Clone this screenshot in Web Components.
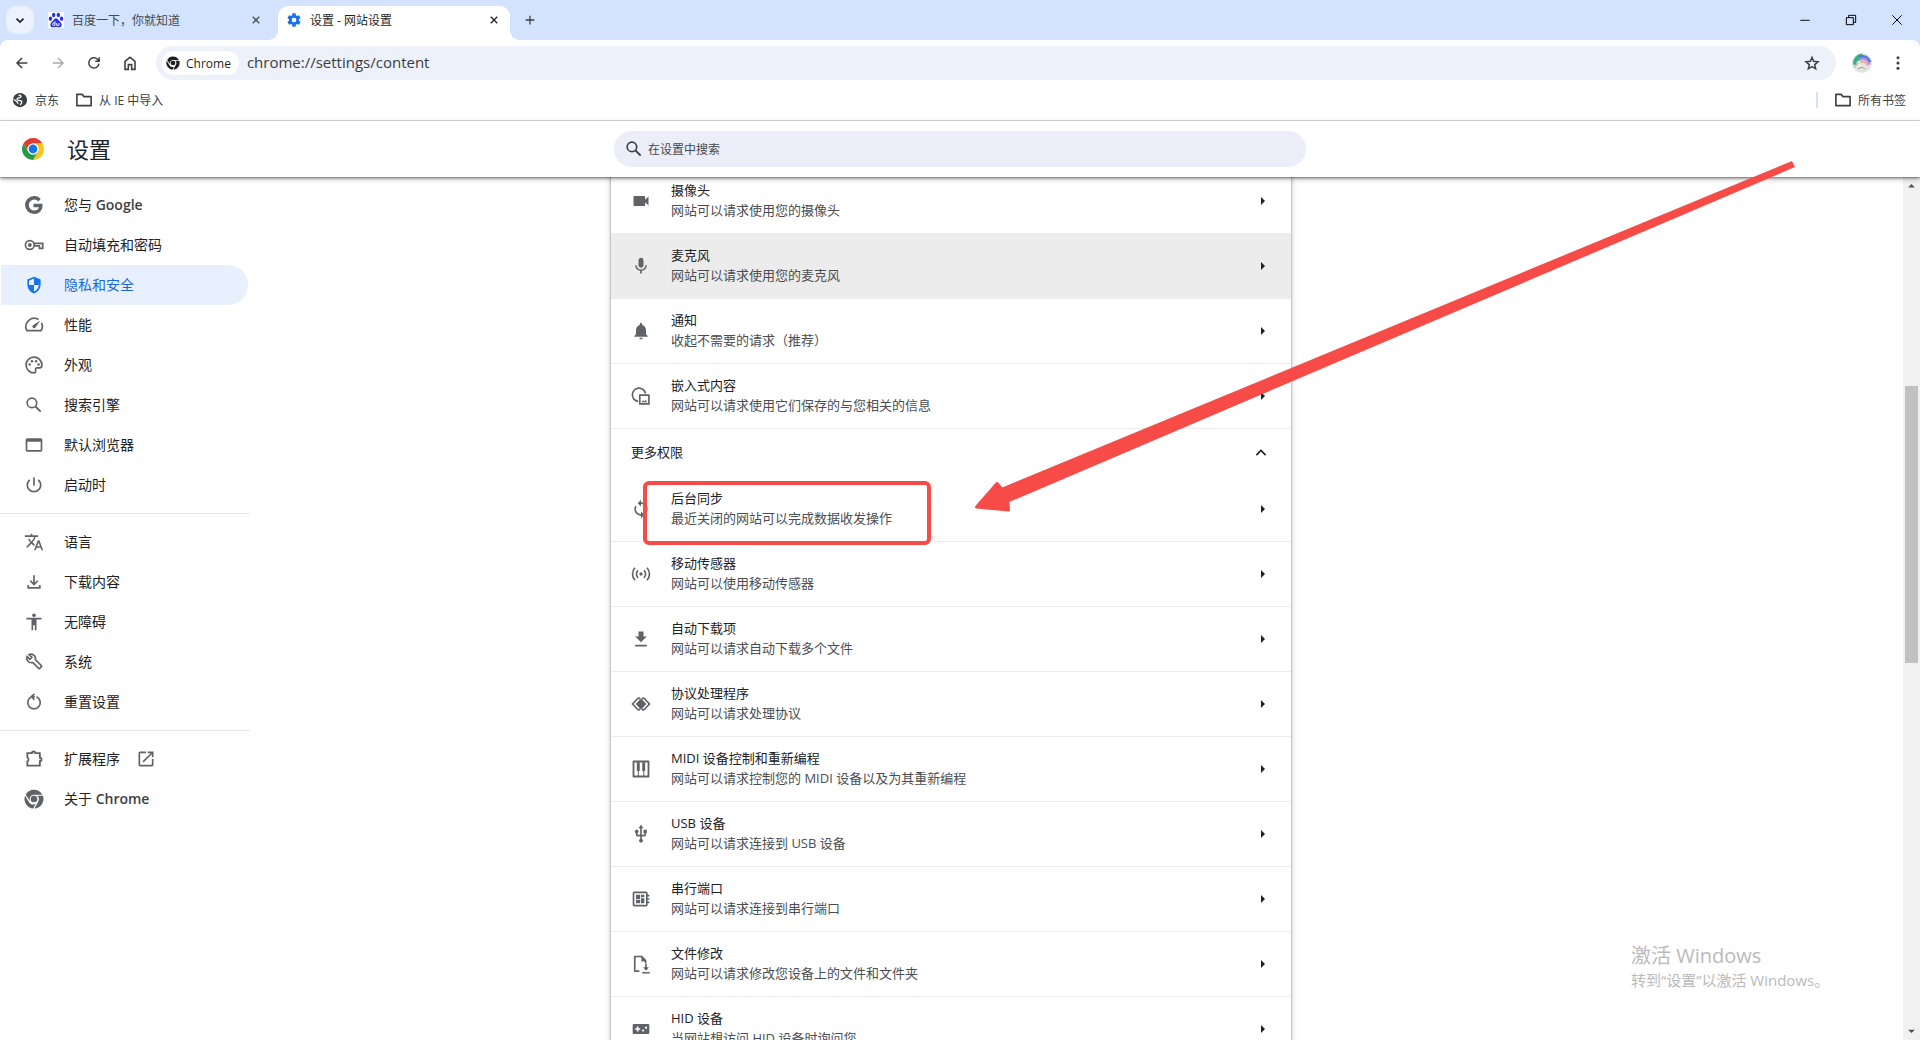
<!DOCTYPE html>
<html lang="zh-CN">
<head>
<meta charset="utf-8">
<title>设置 - 网站设置</title>
<style>
    body {
        margin: 0;
        font-family: "Open Sans", "Noto Sans CJK SC", sans-serif;
        font-size: 13px;
        color: #202124;
        background: #fff;
        overflow: hidden;
    }
    menu-item b {
        font-weight: 600;
        color: #3c4043;
    }
</style>
</head>
<body>
<browser-window>
    <tab-strip slot="tabs">
        <browser-tab icon="baidu">百度一下，你就知道</browser-tab>
        <browser-tab icon="gear" active>设置 - 网站设置</browser-tab>
    </tab-strip>
    <nav-bar slot="nav" url="chrome://settings/content"></nav-bar>
    <bookmark-bar slot="bookmarks">
        <bookmark-item icon="globe">京东</bookmark-item>
        <bookmark-item icon="folder">从 IE 中导入</bookmark-item>
        <bookmark-item slot="end" icon="folder">所有书签</bookmark-item>
    </bookmark-bar>

    <settings-header></settings-header>
    <settings-body>
        <side-menu slot="menu">
            <menu-item icon="google">您与 <b>Google</b></menu-item>
            <menu-item icon="key">自动填充和密码</menu-item>
            <menu-item icon="shield" selected>隐私和安全</menu-item>
            <menu-item icon="speed">性能</menu-item>
            <menu-item icon="palette">外观</menu-item>
            <menu-item icon="search">搜索引擎</menu-item>
            <menu-item icon="window">默认浏览器</menu-item>
            <menu-item icon="power">启动时</menu-item>
            <menu-line></menu-line>
            <menu-item icon="translate">语言</menu-item>
            <menu-item icon="download">下载内容</menu-item>
            <menu-item icon="person">无障碍</menu-item>
            <menu-item icon="wrench">系统</menu-item>
            <menu-item icon="reset">重置设置</menu-item>
            <menu-line></menu-line>
            <menu-item icon="puzzle" after="launch">扩展程序</menu-item>
            <menu-item icon="chrome">关于 <b>Chrome</b></menu-item>
        </side-menu>

        <permission-card>
            <permission-row icon="camera" name="摄像头">网站可以请求使用您的摄像头</permission-row>
            <permission-row icon="mic" name="麦克风" hovered>网站可以请求使用您的麦克风</permission-row>
            <permission-row icon="bell" name="通知">收起不需要的请求（推荐）</permission-row>
            <permission-row icon="embed" name="嵌入式内容">网站可以请求使用它们保存的与您相关的信息</permission-row>
            <group-header>更多权限</group-header>
            <permission-row icon="sync" name="后台同步" marked>最近关闭的网站可以完成数据收发操作</permission-row>
            <permission-row icon="sensor" name="移动传感器">网站可以使用移动传感器</permission-row>
            <permission-row icon="autodown" name="自动下载项">网站可以请求自动下载多个文件</permission-row>
            <permission-row icon="protocol" name="协议处理程序">网站可以请求处理协议</permission-row>
            <permission-row icon="midi" name="MIDI 设备控制和重新编程">网站可以请求控制您的 MIDI 设备以及为其重新编程</permission-row>
            <permission-row icon="usb" name="USB 设备">网站可以请求连接到 USB 设备</permission-row>
            <permission-row icon="serial" name="串行端口">网站可以请求连接到串行端口</permission-row>
            <permission-row icon="fileedit" name="文件修改">网站可以请求修改您设备上的文件和文件夹</permission-row>
            <permission-row icon="hid" name="HID 设备">当网站想访问 HID 设备时询问您</permission-row>
        </permission-card>
    </settings-body>

    <pointer-arrow slot="over"></pointer-arrow>
    <activation-note slot="over"></activation-note>
</browser-window>

<script>
const chromeShape = `
    <path d="M2 6.800A11.500 11.500 0 0 1 22 6.800H12A5.200 5.200 0 0 0 7.500 14.600Z"/>
    <path d="M22.700 8A11.500 11.500 0 0 1 12.500 23.500L17 15.200A6 6 0 0 0 16 8Z"/>
    <path d="M11 23.500A11.500 11.500 0 0 1 1.300 8L6.500 16.500A6 6 0 0 0 14 17.800Z"/>
    <circle cx="12" cy="12" r="4"/>`

const icons = {
    down: '<path d="M6 9.500l6 6 6-6" fill="none" stroke="currentColor" stroke-width="3"/>',
    up: '<path d="M6.500 14.500L12 9l5.500 5.500" fill="none" stroke="currentColor" stroke-width="2"/>',
    close: '<path d="M5.500 5.500l13 13M18.500 5.500l-13 13" stroke="currentColor" stroke-width="2.500"/>',
    plus: '<path d="M12 4.500v15M4.500 12h15" stroke="currentColor" stroke-width="2.200"/>',
    baidu: `<rect width="24" height="24" rx="2" fill="#fff"/>
        <g fill="#2932e1"><ellipse cx="8.500" cy="4.500" rx="2.600" ry="3.500"/><ellipse cx="15.500" cy="4.500" rx="2.600" ry="3.500"/>
        <ellipse cx="3.700" cy="10" rx="2.600" ry="3.300"/><ellipse cx="20.300" cy="10" rx="2.600" ry="3.300"/>
        <path d="M12 9.500c-2 0-3 2-4.500 3.500S3.500 16 3.500 19c0 2.500 1.500 4 3.500 4 2 0 3-.500 5-.500s3 .500 5 .500 3.500-1.500 3.500-4c0-3-2.500-4.500-4-6S14 9.500 12 9.500z"/></g>
        <path d="M10.500 14v6H8.500a1.500 1.500 0 0 1 0-3.500h2M13 16.500V20h3.500v-3.500" fill="none" stroke="#fff" stroke-width="1.400"/>`,
    gear: '<path fill="#1a73e8" d="M19.430 12.980c.040-.320.070-.640.070-.980s-.030-.660-.070-.980l2.110-1.650c.190-.150.240-.420.120-.640l-2-3.460c-.120-.220-.390-.300-.610-.220l-2.490 1c-.520-.400-1.080-.730-1.690-.980l-.380-2.650C14.460 2.180 14.250 2 14 2h-4c-.250 0-.460.180-.490.420l-.380 2.650c-.610.250-1.170.590-1.690.980l-2.490-1c-.230-.090-.490 0-.610.220l-2 3.460c-.130.220-.070.490.120.640l2.110 1.650c-.040.320-.070.650-.070.980s.030.660.070.980l-2.110 1.650c-.190.150-.240.420-.120.640l2 3.460c.120.220.390.300.610.220l2.490-1c.520.400 1.080.730 1.690.980l.380 2.650c.030.240.240.420.490.420h4c.250 0 .460-.180.490-.420l.380-2.650c.610-.250 1.170-.590 1.690-.980l2.490 1c.230.090.490 0 .610-.220l2-3.460c.120-.220.070-.490-.120-.640l-2.110-1.650zM12 15.500A3.500 3.500 0 1 1 12 8.500a3.500 3.500 0 0 1 0 7z"/>',
    back: '<path d="M20 12H5M12 4.500L4.500 12l7.500 7.500" fill="none" stroke="currentColor" stroke-width="2.200"/>',
    forward: '<path d="M4 12h15M12 4.500l7.500 7.500-7.500 7.500" fill="none" stroke="currentColor" stroke-width="2.200"/>',
    reload: '<path d="M19.500 13a7.700 7.700 0 1 1-2.200-6.700L19.500 9M19.800 3.500v6h-6" fill="none" stroke="currentColor" stroke-width="2.200"/>',
    home: '<path d="M4.500 21.500V9.500L12 3.500l7.500 6v12h-5v-7h-5v7z" fill="none" stroke="currentColor" stroke-width="2.400"/>',
    chrome: chromeShape,
    logo: `<g transform="scale(.5)"><path fill="#e33b2e" d="M4.950 13A22 22 0 0 1 43.050 13H24A11 11 0 0 0 14.470 29.500Z"/>
        <path fill="#fcc31e" d="M43.050 13A22 22 0 0 1 24 46L33.530 29.500A11 11 0 0 0 24 13Z"/>
        <path fill="#229a48" d="M24 46A22 22 0 0 1 4.950 13L14.470 29.500A11 11 0 0 0 33.530 29.500Z"/>
        <circle cx="24" cy="24" r="11" fill="#fff"/><circle cx="24" cy="24" r="8.800" fill="#1a73e8"/></g>`,
    star: '<path d="M12 4.500l2.200 5.300 5.800.500-4.400 3.800 1.300 5.600-4.900-3-4.900 3 1.300-5.600L4 10.300l5.800-.500z" fill="none" stroke="currentColor" stroke-width="2"/>',
    dots: '<circle cx="12" cy="4" r="2.300"/><circle cx="12" cy="12" r="2.300"/><circle cx="12" cy="20" r="2.300"/>',
    avatar: `<circle cx="12" cy="12" r="12" fill="#e2e2e2"/>
        <path d="M1.500 14A11 11 0 0 1 12 1l3 5-8 4-2 4z" fill="#3fae86"/>
        <path d="M9 5c6-3 11 1 13 6" fill="none" stroke="#4f7bdc" stroke-width="3"/>
        <path d="M9 8c5-3 10 0 12 6" fill="none" stroke="#b58ae6" stroke-width="2.500"/>
        <path d="M10 11c4-2 7 0 9 4" fill="none" stroke="#f0a7b4" stroke-width="2.500"/>
        <path d="M6 10l4 1 2 4 5 1-2 3-4-2-3 2-3-3z" fill="#f3ead8"/><path d="M3 17l5-5M7 19l5-2 4 2" fill="none" stroke="#8fa39a" stroke-width="1.200"/>`,
    globe: '<circle cx="12" cy="12" r="9.500"/><path d="M10 5.500c3 0 4 1 3 2.500s-5 1-5 3 3 1.500 5 2 2 3-1 5.500M3.500 11.500c2 0 3 1.500 4 2.500s2 1.500 1.500 3" fill="none" stroke="#fff" stroke-width="1.800"/>',
    folder: '<path d="M2.500 19.500v-15h7l2.500 3h9.500v12z" fill="none" stroke="currentColor" stroke-width="2.200" stroke-linejoin="round"/>',
    google: '<path stroke="currentColor" stroke-width="1.500" d="M21.350 11.100h-9.170v2.730h6.510c-.330 3.810-3.500 5.440-6.500 5.440C8.360 19.270 5 16.250 5 12c0-4.100 3.200-7.270 7.200-7.270 3.090 0 4.900 1.970 4.900 1.970L19 4.720S16.560 2 12.100 2C6.420 2 2.030 6.800 2.030 12c0 5.050 4.130 10 10.220 10 5.350 0 9.250-3.670 9.250-9.090 0-1.150-.150-1.810-.150-1.810z"/>',
    key: '<circle cx="7" cy="12" r="5.300" fill="none" stroke="currentColor" stroke-width="2"/><circle cx="7" cy="12" r="2.400"/><path d="M12 10h10.500v6h-4v-3H12" fill="none" stroke="currentColor" stroke-width="2"/>',
    shield: '<path d="M12 2L4 5.500v5.500c0 5 3.400 9.700 8 11 4.600-1.300 8-6 8-11V5.500zm0 10h6c-.500 3.500-2.800 6.700-6 7.800V12H6V6.800l6-2.600z"/>',
    speed: '<path d="M17.500 5.500A10 10 0 0 0 3.500 18.800h17a10 10 0 0 0 .5-9.500" fill="none" stroke="currentColor" stroke-width="2"/><path d="M19.500 6.500l-8.900 5.700a2 2 0 1 0 3.200 2.800z"/>',
    palette: '<path d="M12 2.500a9.500 9.500 0 0 0 0 19c1.500 0 2.300-1.200 2-2.500-.6-2-.2-3.500 2-3.500h2.500c1.800 0 3-1.500 3-3.500 0-5.500-4.500-9.500-9.500-9.500z" fill="none" stroke="currentColor" stroke-width="2"/><circle cx="6.800" cy="11.500" r="1.500"/><circle cx="9.500" cy="7.500" r="1.500"/><circle cx="14.500" cy="7.500" r="1.500"/><circle cx="17.500" cy="11.500" r="1.500"/>',
    search: '<circle cx="9.500" cy="9.500" r="5.700" fill="none" stroke="currentColor" stroke-width="2"/><path d="M13.500 13.500l6.500 6.500" stroke="currentColor" stroke-width="2.300"/>',
    window: '<path d="M2 6a2 2 0 0 1 2-2h16a2 2 0 0 1 2 2v12a2 2 0 0 1-2 2H4a2 2 0 0 1-2-2zm2 2v10h16V8z"/>',
    power: '<path d="M13 3h-2v10h2V3zm4.830 2.170l-1.420 1.420C17.990 7.860 19 9.810 19 12c0 3.870-3.130 7-7 7s-7-3.130-7-7c0-2.190 1.010-4.140 2.580-5.420L6.170 5.170C4.230 6.820 3 9.260 3 12c0 4.970 4.030 9 9 9s9-4.030 9-9c0-2.740-1.230-5.180-3.170-6.830z"/>',
    translate: '<path d="M12.870 15.070l-2.540-2.510.030-.030c1.740-1.940 2.980-4.170 3.710-6.530H17V4h-7V2H8v2H1v1.990h11.170C11.500 7.920 10.440 9.750 9 11.350 8.070 10.320 7.300 9.190 6.690 8h-2c.730 1.630 1.730 3.170 2.980 4.560l-5.090 5.020L4 19l5-5 3.110 3.110.760-2.040zM18.500 10h-2L12 22h2l1.120-3h4.750L21 22h2l-4.500-12zm-2.620 7l1.620-4.330L19.120 17h-3.240z"/>',
    download: '<path d="M12 4v10.500M7.500 10.500L12 15l4.500-4.500M5 15.500V19h14v-3.500" fill="none" stroke="currentColor" stroke-width="2"/>',
    person: '<circle cx="12" cy="4" r="2.200"/><path d="M21 9h-6v13h-2v-6h-2v6H9V9H3V7h18z"/>',
    wrench: '<path d="M21.500 18.700l-8-8a6 6 0 0 0-8.400-6.700l3.700 3.700-2.600 2.600L2.500 6.600a6 6 0 0 0 7.400 7.900l8 8q.7.700 1.400 0l2.200-2.400q.7-.700 0-1.400z" transform="translate(1.500 -.5) scale(.9)" fill="none" stroke="currentColor" stroke-width="2.200"/>',
    reset: '<path d="M9 5.800a7.500 7.500 0 1 0 6 0M8 5.500l5 .200M12.500 2.300L9 5.700l3.500 3.500" fill="none" stroke="currentColor" stroke-width="2"/>',
    puzzle: '<path d="M4 5h5.500a2 2 0 0 1 4 0H19v5.500a2 2 0 0 1 0 4V20H4v-5a3 3 0 0 0 0-5z" fill="none" stroke="currentColor" stroke-width="2.200"/>',
    launch: '<path d="M19 19H5V5h7V3H5a2 2 0 0 0-2 2v14a2 2 0 0 0 2 2h14a2 2 0 0 0 2-2v-7h-2v7zM14 3v2h3.590l-9.830 9.830 1.410 1.410L19 6.410V10h2V3h-7z"/>',
    camera: '<path d="M17 10.500V7a1 1 0 0 0-1-1H4a1 1 0 0 0-1 1v10a1 1 0 0 0 1 1h12a1 1 0 0 0 1-1v-3.500l4 4v-11z"/>',
    mic: '<path d="M12 14c1.660 0 3-1.340 3-3V5c0-1.660-1.340-3-3-3S9 3.340 9 5v6c0 1.660 1.340 3 3 3zm5.300-3c0 3-2.540 5.100-5.300 5.100S6.700 14 6.700 11H5c0 3.410 2.720 6.230 6 6.720V21h2v-3.280c3.280-.480 6-3.300 6-6.720h-1.700z"/>',
    bell: '<path d="M12 22c1.100 0 2-.900 2-2h-4c0 1.100.890 2 2 2zm6-6v-5c0-3.070-1.640-5.640-4.500-6.320V4c0-.830-.670-1.500-1.500-1.500s-1.500.670-1.500 1.500v.680C7.630 5.360 6 7.920 6 11v5l-2 2v1h16v-1l-2-2z"/>',
    embed: '<path d="M8.500 18.500A8 8 0 1 1 17.500 9M10.500 11h11v10.500h-11z" fill="none" stroke="currentColor" stroke-width="2" stroke-linejoin="round"/><path d="M12.500 19.500l2-2.500 1.500 1.500 1.500-2 2 3z"/>',
    sync: '<path d="M12 4V1L8 5l4 4V6c3.310 0 6 2.690 6 6 0 1.010-.250 1.970-.700 2.800l1.460 1.460A7.930 7.930 0 0 0 20 12c0-4.420-3.580-8-8-8zm0 14c-3.310 0-6-2.690-6-6 0-1.010.250-1.970.700-2.800L5.240 7.740A7.930 7.930 0 0 0 4 12c0 4.420 3.580 8 8 8v3l4-4-4-4v3z"/>',
    sensor: '<circle cx="12" cy="12" r="2"/><path d="M8.500 7.500a6 6 0 0 0 0 9M15.500 7.500a6 6 0 0 1 0 9M4.800 4.500a11 11 0 0 0 0 15M19.200 4.500a11 11 0 0 1 0 15" fill="none" stroke="currentColor" stroke-width="2"/>',
    autodown: '<path d="M19 9h-4V3H9v6H5l7 7 7-7zM5 19v2h14v-2H5z"/>',
    protocol: '<path d="M12 5.500l6.500 6.500-6.500 6.500L5.500 12z"/><path d="M9 4.500L1.800 12 9 19.500M15 4.500l7.200 7.500-7.200 7.500M9 4.500l2 1.500M15 4.500L13 6M9 19.500l2-1.500M15 19.500L13 18" fill="none" stroke="currentColor" stroke-width="2"/>',
    midi: '<path d="M3 3h18v18H3z" fill="none" stroke="currentColor" stroke-width="2.200" stroke-linejoin="round"/><path d="M7 4h3.500v10.500H7zM13.500 4H17v10.500h-3.500zM8.200 14h1.200v6.500H8.200zM14.700 14h1.200v6.500h-1.200z"/>',
    usb: '<path d="M15 7v4h1v2h-3V5h2l-3-4-3 4h2v8H8v-2.070A2.200 2.200 0 1 0 5.800 11v2c0 1.110.890 2 2 2h3.200v3.050a2.200 2.200 0 1 0 2 0V15h3c1.110 0 2-.890 2-2v-2h1V7h-4z"/>',
    serial: '<path d="M2 5a2 2 0 0 1 2-2h14a2 2 0 0 1 2 2v2h2v2h-2v2h2v2h-2v2h2v2h-2v2a2 2 0 0 1-2 2H4a2 2 0 0 1-2-2zm2 0v14h14V5zm2 2h5v5H6zm6 0h4v3h-4zm-6 6h5v4H6zm6-2h4v6h-4z" fill-rule="evenodd"/>',
    fileedit: '<path d="M10 20.500H4.500V3H13l4.500 5v3.500" fill="none" stroke="currentColor" stroke-width="2" stroke-linejoin="round"/><path d="M12.500 3v6h5.500zM17 12h2v4h2.500L18 20l-3.500-4H17zM13.500 21.500h9v1.800h-9z"/>',
    hid: '<path fill-rule="evenodd" d="M3.500 6h17A1.500 1.500 0 0 1 22 7.500v9a1.500 1.500 0 0 1-1.500 1.500h-17A1.500 1.500 0 0 1 2 16.500v-9A1.500 1.500 0 0 1 3.500 6zM11 11H9V9H7v2H5v2h2v2h2v-2h2zm3.500 1.500a1.300 1.300 0 1 0 .010 0zm3.500-3.500a1.300 1.300 0 1 0 .010 0z"/>',
    minimize: '<path d="M4 12.500h16" stroke="currentColor" stroke-width="1.600"/>',
    restore: '<path d="M4 8h12v12H4zM8 8V4h12v12h-4" fill="none" stroke="currentColor" stroke-width="1.700"/>',
    exit: '<path d="M4 4l16 16M20 4L4 20" stroke="currentColor" stroke-width="1.700"/>',
    right: '<path d="M9 6l6 6-6 6z"/>',
    scrollup: '<path d="M3 17l9-9 9 9z"/>',
    scrolldown: '<path d="M3 7l9 9 9-9z"/>'
}

// every element fills its open shadow root from its template() method
class BaseElement extends HTMLElement {
    connectedCallback() {
        this.shadow = this.attachShadow({ mode: 'open' })
        this.shadow.innerHTML = `
        <style>
            *{ box-sizing: border-box; }
            button{
                font: inherit;
                color: inherit;
                background: none;
                border: 0;
                padding: 0;
                display: flex;
                align-items: center;
                justify-content: center;
            }
            a{ color: inherit; text-decoration: none; }
            input{
                font: inherit;
                color: inherit;
                border: 0;
                padding: 0;
                background: none;
                outline: none;
                min-width: 0;
            }
        </style>` + this.template()
    }
}

class UiIcon extends BaseElement {
    template() {
        return `
        <style>
            :host{ display: block; flex: none; width: var(--size, 20px); height: var(--size, 20px); }
            svg{ display: block; width: 100%; height: 100%; fill: currentColor; }
        </style>
        <svg viewBox="0 0 24 24" aria-hidden="true">${icons[this.getAttribute('name')]}</svg>`
    }
}

class BrowserWindow extends BaseElement {
    template() {
        return `
        <style>
            :host{
                display: flex;
                flex-direction: column;
                height: 100vh;
                position: relative;
                overflow: hidden;
            }
            .top{ background: #d3e3fd; }
            .bars{ background: #fff; border-radius: 8px 8px 0 0; border-bottom: 1px solid #dedfe0; }
        </style>
        <div class="top">
            <slot name="tabs"></slot>
            <div class="bars">
                <slot name="nav"></slot>
                <slot name="bookmarks"></slot>
            </div>
        </div>
        <slot></slot>
        <slot name="over"></slot>`
    }
}

class TabStrip extends BaseElement {
    template() {
        return `
        <style>
            :host{ display: flex; height: 40px; padding-left: 6px; font-size: 12px; }
            .list{
                width: 28px;
                height: 28px;
                margin: 6px 6px 0 0;
                border-radius: 10px;
                background: #ebf1fd;
                --size: 14px;
            }
            .tabs{ display: flex; gap: 6px; padding-top: 6px; }
            .new{ width: 28px; height: 40px; margin-left: 6px; --size: 14px; color: #3c4043; }
            .system{ display: flex; margin-left: auto; --size: 14px; color: #000; }
            .system button{ width: 46px; height: 40px; }
        </style>
        <button class="list" aria-label="搜索标签页"><ui-icon name="down"></ui-icon></button>
        <div class="tabs"><slot></slot></div>
        <button class="new" aria-label="新标签页"><ui-icon name="plus"></ui-icon></button>
        <div class="system">
            <button aria-label="最小化"><ui-icon name="minimize"></ui-icon></button>
            <button aria-label="还原"><ui-icon name="restore"></ui-icon></button>
            <button aria-label="关闭"><ui-icon name="exit"></ui-icon></button>
        </div>`
    }
}

class BrowserTab extends BaseElement {
    template() {
        return `
        <style>
            :host{
                display: flex;
                align-items: center;
                gap: 8px;
                width: 232px;
                padding: 0 8px 6px;
                box-sizing: border-box;
                position: relative;
                color: #45494d;
                --size: 16px;
            }
            :host([active]){ background: #fff; border-radius: 10px 10px 0 0; color: #1f1f1f; }
            :host([active])::before, :host([active])::after{
                content: "";
                position: absolute;
                bottom: 0;
                width: 10px;
                height: 10px;
            }
            :host([active])::before{ right: 100%; background: radial-gradient(circle at 0 0, transparent 10px, #fff 10px); }
            :host([active])::after{ left: 100%; background: radial-gradient(circle at 100% 0, transparent 10px, #fff 10px); }
            span{ flex: 1; white-space: nowrap; }
            button{ width: 16px; height: 16px; --size: 12px; }
        </style>
        <ui-icon name="${this.getAttribute('icon')}"></ui-icon>
        <span><slot></slot></span>
        <button aria-label="关闭标签页"><ui-icon name="close"></ui-icon></button>`
    }
}

class NavBar extends BaseElement {
    template() {
        return `
        <style>
            :host{
                display: flex;
                align-items: center;
                gap: 12px;
                padding: 6px 8px;
                color: #3c4043;
                --size: 16px;
            }
            .group{ display: flex; gap: 8px; }
            .group button{ width: 28px; height: 28px; }
            .group button:disabled{ color: #aaacae; }
            .omnibox{
                flex: 1;
                display: flex;
                align-items: center;
                gap: 8px;
                height: 34px;
                padding: 0 10px 0 6px;
                border-radius: 17px;
                background: #edf1fa;
            }
            .chip{
                height: 24px;
                padding: 0 8px 0 4px;
                gap: 6px;
                border-radius: 12px;
                background: #fff;
                font-size: 12px;
                color: #1f1f1f;
                --size: 14px;
            }
            input{ flex: 1; font-size: 15px; color: #3a3d41; padding-bottom: 2px; }
            .star{ width: 28px; height: 28px; --size: 18px; }
            .avatar{ --size: 20px; }
        </style>
        <div class="group">
            <button aria-label="后退"><ui-icon name="back"></ui-icon></button>
            <button aria-label="前进" disabled><ui-icon name="forward"></ui-icon></button>
            <button aria-label="重新加载"><ui-icon name="reload"></ui-icon></button>
            <button aria-label="主页"><ui-icon name="home"></ui-icon></button>
        </div>
        <div class="omnibox">
            <button class="chip"><ui-icon name="chrome"></ui-icon>Chrome</button>
            <input type="text" aria-label="地址" value="${this.getAttribute('url')}">
            <button class="star" aria-label="为此标签页添加书签"><ui-icon name="star"></ui-icon></button>
        </div>
        <div class="group">
            <button class="avatar" aria-label="个人资料"><ui-icon name="avatar"></ui-icon></button>
            <button aria-label="更多"><ui-icon name="dots"></ui-icon></button>
        </div>`
    }
}

class BookmarkBar extends BaseElement {
    template() {
        return `
        <style>
            :host{
                display: flex;
                align-items: center;
                gap: 16px;
                height: 34px;
                padding: 0 14px 6px 11px;
                box-sizing: border-box;
                font-size: 12px;
                color: #3c4043;
            }
            i{ width: 2px; height: 16px; margin-left: auto; background: #d3e3fd; }
        </style>
        <slot></slot>
        <i></i>
        <slot name="end"></slot>`
    }
}

class BookmarkItem extends BaseElement {
    template() {
        return `
        <style>
            :host{ display: block; --size: 18px; }
            button{ gap: 6px; white-space: nowrap; }
        </style>
        <button><ui-icon name="${this.getAttribute('icon')}"></ui-icon><slot></slot></button>`
    }
}

class SettingsHeader extends BaseElement {
    template() {
        return `
        <style>
            :host{
                display: grid;
                grid-template-columns: 1fr minmax(0, 692px) 1fr;
                align-items: center;
                height: 56px;
                flex: none;
                position: relative;
                z-index: 1;
                background: #fff;
                box-shadow: 0 1px 2px rgba(0, 0, 0, .4), 0 2px 5px rgba(0, 0, 0, .3);
            }
            .title{ display: flex; align-items: center; gap: 22px; padding-left: 21px; --size: 24px; }
            h1{ margin: 0; font-size: 22px; line-height: 32px; font-weight: 400; }
            label{
                display: flex;
                align-items: center;
                gap: 4px;
                height: 36px;
                padding: 0 10px;
                border-radius: 18px;
                background: #ebeef8;
                font-size: 12px;
                color: #3c4043;
            }
            input{ flex: 1; }
            input::placeholder{ color: #45484c; }
        </style>
        <div class="title"><ui-icon name="logo"></ui-icon><h1>设置</h1></div>
        <label><ui-icon name="search"></ui-icon><input type="search" placeholder="在设置中搜索"></label>`
    }
}

class SettingsBody extends BaseElement {
    template() {
        return `
        <style>
            :host{
                flex: 1;
                min-height: 0;
                display: grid;
                grid-template-columns: 1fr minmax(0, 680px) 1fr 18px;
            }
            .content{ min-height: 0; }
            .track{
                grid-column: 4;
                justify-self: end;
                width: 17px;
                display: flex;
                flex-direction: column;
                align-items: center;
                background: #f1f1f1;
                color: #505050;
                --size: 9px;
            }
            .track button{ width: 17px; height: 17px; flex: none; }
            .above{ flex: 192; }
            .thumb{ width: 13px; flex: 277; background: #c1c1c1; }
            .below{ flex: 360; }
        </style>
        <slot name="menu"></slot>
        <div class="content"><slot></slot></div>
        <div class="track">
            <button aria-label="向上滚动"><ui-icon name="scrollup"></ui-icon></button>
            <div class="above"></div>
            <div class="thumb"></div>
            <div class="below"></div>
            <button aria-label="向下滚动"><ui-icon name="scrolldown"></ui-icon></button>
        </div>`
    }
}

class SideMenu extends BaseElement {
    template() {
        return `
        <style>
            :host{ display: block; width: 250px; padding-top: 8px; }
            nav{ display: flex; flex-direction: column; }
        </style>
        <nav><slot></slot></nav>`
    }
}

class MenuLine extends BaseElement {
    template() {
        return `
        <style>
            :host{ display: block; height: 1px; margin: 8px 0; background: #e8e8e9; }
        </style>`
    }
}

class MenuItem extends BaseElement {
    template() {
        const after = this.getAttribute('after')
        return `
        <style>
            :host{ display: block; margin: 0 2px 0 1px; font-size: 14px; color: #202124; }
            a{
                display: flex;
                align-items: center;
                gap: 20px;
                height: 40px;
                padding-left: 23px;
                border-radius: 0 20px 20px 0;
            }
            span{ padding-bottom: 2px; }
            ui-icon{ color: #5f6368; }
            :host([selected]) a{ background: #e8f0fe; color: #1967d2; }
            :host([selected]) ui-icon{ color: #1a73e8; }
            .after{ margin-left: -4px; }
        </style>
        <a href="#">
            <ui-icon name="${this.getAttribute('icon')}"></ui-icon>
            <span><slot></slot></span>
            ${after ? `<ui-icon class="after" name="${after}"></ui-icon>` : ''}
        </a>`
    }
}

class PermissionCard extends BaseElement {
    template() {
        return `
        <style>
            :host{
                display: block;
                margin-top: -8px;
                background: #fff;
                box-shadow: 0 0 2px rgba(60, 64, 67, .6), 0 0 6px 1px rgba(60, 64, 67, .2);
            }
        </style>
        <slot></slot>`
    }
}

class GroupHeader extends BaseElement {
    template() {
        return `
        <style>
            :host{ display: block; }
            button{ width: 100%; height: 48px; padding: 0 20px; justify-content: space-between; }
            span{ padding-bottom: 4px; }
        </style>
        <button aria-expanded="true"><span><slot></slot></span><ui-icon name="up"></ui-icon></button>`
    }
}

class PermissionRow extends BaseElement {
    template() {
        return `
        <style>
            :host{ display: block; position: relative; border-bottom: 1px solid #ececed; }
            :host([hovered]){ background: #ececec; }
            button{ width: 100%; height: 64px; padding: 0 20px; gap: 20px; text-align: left; line-height: 20px; }
            ui-icon{ color: #5f6368; }
            .text{ flex: 1; padding-bottom: 2px; }
            .text span{ display: block; }
            .sub{ color: #4a4d51; }
            .arrow{ --size: 16px; color: #202124; }
            .mark{
                position: absolute;
                left: 32px;
                top: 4px;
                width: 288px;
                height: 64px;
                border: 4px solid #f64b46;
                border-radius: 6px;
                z-index: 1;
                pointer-events: none;
            }
        </style>
        <button>
            <ui-icon name="${this.getAttribute('icon')}"></ui-icon>
            <span class="text">
                <span>${this.getAttribute('name')}</span>
                <span class="sub"><slot></slot></span>
            </span>
            <ui-icon class="arrow" name="right"></ui-icon>
        </button>
        ${this.hasAttribute('marked') ? '<div class="mark"></div>' : ''}`
    }
}

class PointerArrow extends BaseElement {
    template() {
        return `
        <style>
            :host{
                position: absolute;
                z-index: 2;
                left: calc(50% + 10px);
                top: 160px;
                pointer-events: none;
            }
            svg{ display: block; fill: #f64b46; stroke: #f64b46; stroke-width: 3; stroke-linejoin: round; }
            .shaft{ stroke: none; }
        </style>
        <svg width="830" height="356" viewBox="0 0 830 356">
            <path class="shaft" d="M31 328L822 1l3 6L37 343z"/>
            <path d="M6.500 347L27 323.500l6 7 5 11 .500 8.500z"/>
        </svg>`
    }
}

class ActivationNote extends BaseElement {
    template() {
        return `
        <style>
            :host{
                position: absolute;
                z-index: 2;
                left: calc(100% - 289px);
                bottom: 50px;
                color: #bababa;
                white-space: nowrap;
                pointer-events: none;
            }
            p{ margin: 0; font-size: 15px; line-height: 20px; }
            .big{ font-size: 20px; line-height: 28px; }
        </style>
        <p class="big">激活 Windows</p>
        <p>转到“设置”以激活 Windows。</p>`
    }
}

customElements.define('ui-icon', UiIcon)
customElements.define('browser-window', BrowserWindow)
customElements.define('tab-strip', TabStrip)
customElements.define('browser-tab', BrowserTab)
customElements.define('nav-bar', NavBar)
customElements.define('bookmark-bar', BookmarkBar)
customElements.define('bookmark-item', BookmarkItem)
customElements.define('settings-header', SettingsHeader)
customElements.define('settings-body', SettingsBody)
customElements.define('side-menu', SideMenu)
customElements.define('menu-line', MenuLine)
customElements.define('menu-item', MenuItem)
customElements.define('permission-card', PermissionCard)
customElements.define('group-header', GroupHeader)
customElements.define('permission-row', PermissionRow)
customElements.define('pointer-arrow', PointerArrow)
customElements.define('activation-note', ActivationNote)
</script>
</body>
</html>
